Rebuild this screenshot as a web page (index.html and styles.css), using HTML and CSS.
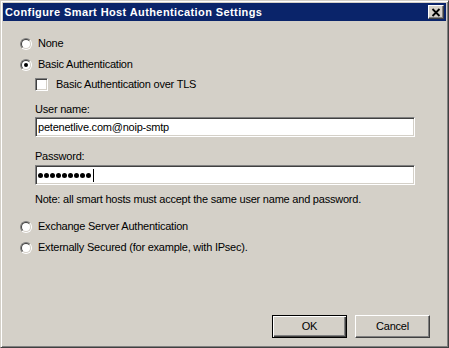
FILE: index.html
```html
<!doctype html>
<html lang="en">
<head>
	<meta charset="utf-8">
	<title>Configure Smart Host Authentication Settings</title>
	<link rel="stylesheet" href="styles.css">
</head>
<body>
	<div class="window">
		<div class="titlebar">
			<span class="title">Configure Smart Host Authentication Settings</span>
			<span class="close">
				<svg width="10" height="9" viewBox="0 0 10 9"><path d="M1.5 1 L8.5 8 M8.5 1 L1.5 8" stroke="#000" stroke-width="1.8"/></svg>
			</span>
		</div>
		<div class="client">
			<div class="row">
				<span class="radio"></span>
				<span class="label">None</span>
			</div>
			<div class="row row-basic">
				<span class="radio checked"></span>
				<span class="label">Basic Authentication</span>
			</div>
			<div class="sub">
				<div class="row row-tls">
					<span class="check"></span>
					<span class="label">Basic Authentication over TLS</span>
				</div>
				<div class="field-label user-label">User name:</div>
				<div class="textbox">petenetlive.com@noip-smtp</div>
				<div class="field-label pass-label">Password:</div>
				<div class="textbox password">
					<span class="dot"></span><span class="dot"></span><span class="dot"></span><span class="dot"></span><span class="dot"></span><span class="dot"></span><span class="dot"></span><span class="dot"></span><span class="dot"></span><span class="caret"></span>
				</div>
				<div class="note">Note: all smart hosts must accept the same user name and password.</div>
			</div>
			<div class="row row-exchange">
				<span class="radio"></span>
				<span class="label">Exchange Server Authentication</span>
			</div>
			<div class="row row-external">
				<span class="radio"></span>
				<span class="label">Externally Secured (for example, with IPsec).</span>
			</div>
			<div class="buttons">
				<span class="button default">OK</span>
				<span class="button">Cancel</span>
			</div>
		</div>
	</div>
</body>
</html>
```

FILE: styles.css
```css
body {
	margin: 0;
	font-family: "Liberation Sans", Arial, sans-serif;
	font-size: 11px;
	line-height: 13px;
	letter-spacing: -0.22px;
	color: #000;
}

.window {
	box-sizing: border-box;
	width: 449px;
	height: 348px;
	display: flex;
	flex-direction: column;
	background: #d4d0c8;
	border: 1px solid;
	border-color: #d4d0c8 #404040 #404040 #d4d0c8;
	box-shadow: inset 1px 1px #fff, inset -1px -1px #808080;
	padding: 2px;
}

.titlebar {
	height: 18px;
	display: flex;
	align-items: center;
	justify-content: space-between;
	background: #0a246a;
	padding-left: 2px;
	padding-right: 2px;
}
.title {
	color: #fff;
	font-weight: bold;
	font-size: 11px;
	letter-spacing: 0.4px;
}
.close {
	box-sizing: border-box;
	width: 16px;
	height: 14px;
	display: flex;
	align-items: center;
	justify-content: center;
	background: #d4d0c8;
	border: 1px solid;
	border-color: #fff #404040 #404040 #fff;
	box-shadow: inset -1px -1px #808080;
}

.client {
	flex: 1;
	display: flex;
	flex-direction: column;
	padding: 16px 0 7px 17px;
}

.row {
	display: flex;
	align-items: center;
	height: 13px;
}
.row-basic { margin-top: 8px; }
.row-tls { margin-top: 7px; }
.row-exchange { margin-top: 14px; }
.row-external { margin-top: 8px; }

.radio {
	position: relative;
	box-sizing: border-box;
	width: 12px;
	height: 12px;
	border-radius: 50%;
	border: 1px solid;
	border-color: #808080 #fff #fff #808080;
	margin-right: 6px;
}
.radio::before {
	content: "";
	position: absolute;
	left: 0;
	top: 0;
	box-sizing: border-box;
	width: 10px;
	height: 10px;
	border-radius: 50%;
	border: 1px solid;
	border-color: #404040 #d4d0c8 #d4d0c8 #404040;
	background: #fff;
}
.radio.checked::after {
	content: "";
	position: absolute;
	left: 3px;
	top: 3px;
	width: 4px;
	height: 4px;
	border-radius: 50%;
	background: #000;
}

.check {
	box-sizing: border-box;
	width: 13px;
	height: 13px;
	background: #fff;
	border: 1px solid;
	border-color: #808080 #fff #fff #808080;
	box-shadow: inset 1px 1px #404040, inset -1px -1px #d4d0c8;
	margin-right: 8px;
}

.sub {
	margin-left: 15px;
	display: flex;
	flex-direction: column;
}

.field-label { height: 13px; }
.user-label { margin-top: 12px; }
.pass-label { margin-top: 13px; }

.textbox {
	box-sizing: border-box;
	width: 380px;
	height: 20px;
	display: flex;
	align-items: center;
	padding-left: 2px;
	background: #fff;
	border: 1px solid;
	border-color: #808080 #fff #fff #808080;
	box-shadow: inset 1px 1px #404040, inset -1px -1px #d4d0c8;
	margin-top: 1px;
}
.password {
	margin-top: 2px;
	gap: 1px;
}
.dot {
	width: 5px;
	height: 5px;
	border-radius: 50%;
	background: #000;
}
.caret {
	width: 1px;
	height: 13px;
	background: #000;
	margin-left: 1px;
}

.note {
	margin-top: 8px;
	height: 13px;
}

.buttons {
	margin-top: auto;
	display: flex;
	justify-content: flex-end;
	gap: 8px;
	padding-right: 16px;
}
.button {
	box-sizing: border-box;
	width: 75px;
	height: 23px;
	display: flex;
	align-items: center;
	justify-content: center;
	border: 1px solid;
	border-color: #fff #404040 #404040 #fff;
	box-shadow: inset -1px -1px #808080, inset 1px 1px #d4d0c8;
}
.button.default {
	border-color: #000;
	box-shadow: inset 1px 1px #fff, inset -1px -1px #404040, inset -2px -2px #808080;
}
```
